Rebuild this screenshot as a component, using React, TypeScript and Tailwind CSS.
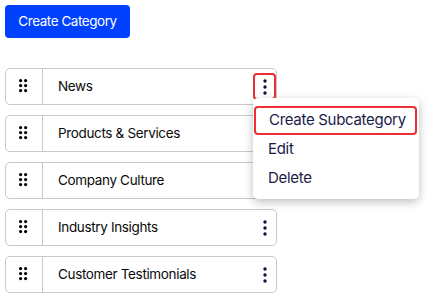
import React from "react";

const rows = [
  "News",
  "Products & Services",
  "Company Culture",
  "Industry Insights",
  "Customer Testimonials",
];

function DragIcon() {
  return (
    <svg width="10" height="15" viewBox="0 0 10 15" className="block">
      {[0, 1, 2].map((r) =>
        [0, 1].map((c) => (
          <circle key={`${r}-${c}`} cx={1.6 + c * 5} cy={1.6 + r * 5} r={1.6} fill="#000" />
        ))
      )}
    </svg>
  );
}

function Kebab() {
  return (
    <svg width="4" height="16" viewBox="0 0 4 16" className="block">
      <circle cx="2" cy="2" r="1.7" fill="#0f1437" />
      <circle cx="2" cy="8" r="1.7" fill="#0f1437" />
      <circle cx="2" cy="14" r="1.7" fill="#0f1437" />
    </svg>
  );
}

export default function App() {
  return (
    <div
      className="p-[5px] bg-white min-h-[299px]"
      style={{ fontFamily: "Inter, 'Noto Sans', sans-serif" }}
    >
      <button className="h-[33px] w-[125px] rounded-[4px] bg-[#0040ff] text-[13.5px] tracking-[-0.45px] text-white flex items-center justify-center">
        Create Category
      </button>
      <div className="mt-[30px] flex flex-col gap-[10px]">
        {rows.map((name, i) => (
          <div
            key={name}
            className="relative flex h-[37px] w-[272px] items-center rounded-[5px] border border-[#c9c9c9] bg-white"
          >
            <div className="flex h-full w-[37px] items-center justify-center border-r border-[#c9c9c9]">
              <DragIcon />
            </div>
            <div className="flex-1 pl-[15px] text-[13.5px] tracking-[-0.35px] text-[#0a0a0a]">{name}</div>
            {i === 0 ? (
              <div className="flex h-[27px] w-[23px] items-center justify-center rounded-[4px] border-2 border-[#ec2f35]">
                <Kebab />
              </div>
            ) : i === 1 || i === 2 ? (
              <div className="w-[23px]" />
            ) : (
              <div className="flex h-[27px] w-[23px] items-center justify-center">
                <Kebab />
              </div>
            )}
            {i === 0 && (
              <div className="absolute left-[247px] top-[29px] z-10 w-[166px] rounded-[5px] bg-white pt-[8px] pb-[6px] shadow-[0_3px_10px_rgba(0,0,0,0.25)]">
                <div className="ml-[1px] mr-[2px] flex h-[29px] items-center rounded-[4px] border-2 border-[#ec2f35] pl-[13px] text-[15px] tracking-[-0.3px] text-[#1c1a45]">
                  Create Subcategory
                </div>
                <div className="flex h-[29px] items-center pl-[15px] text-[15px] tracking-[-0.3px] text-[#1c1a45]">
                  Edit
                </div>
                <div className="flex h-[29px] items-center pl-[15px] text-[15px] tracking-[-0.3px] text-[#1c1a45]">
                  Delete
                </div>
              </div>
            )}
          </div>
        ))}
      </div>
    </div>
  );
}
